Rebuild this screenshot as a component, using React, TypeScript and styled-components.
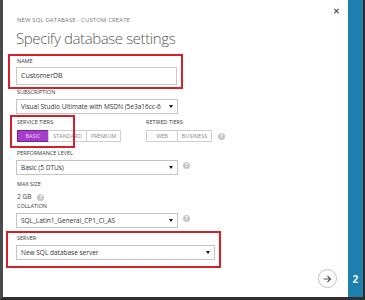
import React from "react";
import styled, { createGlobalStyle } from "styled-components";

const GlobalStyle = createGlobalStyle`
  html, body {
    margin: 0;
    padding: 0;
    background: #fff;
  }
  body {
    font-family: "Open Sans", "Noto Sans", "Liberation Sans", sans-serif;
  }
`;

const Frame = styled.div`
  width: 365px;
  height: 300px;
  box-sizing: border-box;
  display: flex;
  background: #fff;
  border-left: 3px solid #4a4a4a;
  border-right: 2px solid #2c2c2c;
  border-bottom: 3px solid #2f2f2f;
`;

const Main = styled.div`
  position: relative;
  flex: 1;
  display: flex;
  flex-direction: column;
  padding: 16px 11px 9px 13px;
`;

const CloseButton = styled.span`
  position: absolute;
  top: 6px;
  right: 8px;
  font-size: 8px;
  line-height: 10px;
  font-weight: 700;
  color: #555;
`;

const Subtitle = styled.div`
  font-size: 6px;
  line-height: 8px;
  color: #7a7a7a;
  letter-spacing: 0.1px;
  padding-left: 1px;
`;

const Heading = styled.h1`
  margin: 4px 0 0;
  font-size: 15px;
  line-height: 20px;
  font-weight: 300;
  letter-spacing: -0.4px;
  color: #5a5a5a;
`;

const Field = styled.div<{ $mt: number; $width?: number }>`
  position: relative;
  margin-top: ${(p) => p.$mt}px;
  width: ${(p) => (p.$width ? `${p.$width}px` : "auto")};
`;

const Callout = styled.div<{ $t: number; $l: number; $r: number; $b: number }>`
  position: absolute;
  top: ${(p) => -p.$t}px;
  left: ${(p) => -p.$l}px;
  right: ${(p) => -p.$r}px;
  bottom: ${(p) => -p.$b}px;
  border: 2px solid #d71f2b;
  pointer-events: none;
`;

const Label = styled.div`
  font-size: 5.5px;
  line-height: 6px;
  color: #3a3a3a;
  text-transform: uppercase;
  padding-left: 1px;
`;

const TextInput = styled.div`
  margin-top: 3px;
  width: 161px;
  height: 18px;
  box-sizing: border-box;
  border: 1px solid #c8c8c8;
  font-size: 7px;
  line-height: 16px;
  padding-left: 4px;
  color: #333;
`;

const ControlRow = styled.div`
  display: flex;
  align-items: center;
  gap: 5px;
`;

const Select = styled.div<{ $width: number }>`
  margin-top: 4px;
  width: ${(p) => p.$width}px;
  height: 15px;
  box-sizing: border-box;
  border: 1px solid #c4c4c4;
  display: flex;
  align-items: center;
  justify-content: space-between;
  padding: 0 4px;
  font-size: 6.5px;
  color: #333;
  white-space: nowrap;
  overflow: hidden;
`;

const Arrow = styled.svg`
  flex: none;
  width: 4px;
  height: 3px;
  margin-left: 2px;
`;

const Help = styled.span`
  display: inline-flex;
  align-items: center;
  justify-content: center;
  width: 7px;
  height: 7px;
  border-radius: 50%;
  background: #c6c6c6;
  color: #fff;
  font-size: 5px;
  font-weight: 700;
  line-height: 1;
`;

const TierRow = styled.div`
  display: flex;
  margin-top: 5px;
  gap: 24px;
  align-items: flex-end;
`;

const TierGroup = styled.div`
  position: relative;
`;

const Segments = styled.div`
  display: flex;
  align-items: center;
  margin-top: 5px;
  padding-left: 1px;
`;

const Segment = styled.span<{ $width: number; $active?: boolean }>`
  width: ${(p) => p.$width}px;
  height: 12px;
  box-sizing: border-box;
  display: flex;
  align-items: center;
  justify-content: center;
  margin-left: -1px;
  font-size: 5.5px;
  text-transform: uppercase;
  color: ${(p) => (p.$active ? "#f1dcf7" : "#8a8a8a")};
  background: ${(p) => (p.$active ? "#a73bcb" : "#fff")};
  border: 1px solid ${(p) => (p.$active ? "#6f2a86" : "#cfcfcf")};
  &:first-child {
    margin-left: 0;
  }
`;

const SizeRow = styled.div`
  display: flex;
  align-items: center;
  gap: 6px;
  margin-top: 6px;
  padding-left: 1px;
  font-size: 6.5px;
  line-height: 8px;
  color: #444;
`;

const Footer = styled.div`
  margin-top: auto;
  display: flex;
  justify-content: flex-end;
`;

const NextButton = styled.span`
  width: 19px;
  height: 19px;
  box-sizing: border-box;
  border-radius: 50%;
  border: 1px solid #c2c2c2;
  background: #fff;
  display: flex;
  align-items: center;
  justify-content: center;
`;

const StepBar = styled.div`
  width: 15px;
  background: #1c7fae;
  display: flex;
  flex-direction: column;
  justify-content: flex-end;
  align-items: center;
  padding-bottom: 12px;
  color: #fff;
  font-size: 10px;
  font-weight: 700;
  font-family: "Liberation Sans", sans-serif;
`;

function DropArrow() {
  return (
    <Arrow viewBox="0 0 4 3">
      <path d="M0 0 L4 0 L2 3 Z" fill="#111" />
    </Arrow>
  );
}

export default function App() {
  return (
    <>
      <GlobalStyle />
      <Frame>
        <Main>
          <CloseButton>✕</CloseButton>
          <Subtitle>NEW SQL DATABASE - CUSTOM CREATE</Subtitle>
          <Heading>Specify database settings</Heading>

          <Field $mt={10} $width={161}>
            <Callout $t={4} $l={8} $r={6} $b={4} />
            <Label>Name</Label>
            <TextInput>CustomerDB</TextInput>
          </Field>

          <Field $mt={4}>
            <Label>Subscription</Label>
            <Select $width={162}>
              Visual Studio Ultimate with MSDN (5e3a16cc-6
              <DropArrow />
            </Select>
          </Field>

          <TierRow>
            <TierGroup>
              <Callout $t={4} $l={6} $r={-46} $b={6} />
              <Label>Service tiers</Label>
              <Segments>
                <Segment $width={32} $active>
                  Basic
                </Segment>
                <Segment $width={39}>Standard</Segment>
                <Segment $width={35}>Premium</Segment>
              </Segments>
            </TierGroup>
            <TierGroup>
              <Label>Retired tiers</Label>
              <Segments>
                <Segment $width={32}>Web</Segment>
                <Segment $width={35}>Business</Segment>
                <Help style={{ marginLeft: 6 }}>?</Help>
              </Segments>
            </TierGroup>
          </TierRow>

          <Field $mt={8}>
            <Label>Performance level</Label>
            <ControlRow>
              <Select $width={162}>
                Basic (5 DTUs)
                <DropArrow />
              </Select>
              <Help>?</Help>
            </ControlRow>
          </Field>

          <Field $mt={6}>
            <Label>Max size</Label>
            <SizeRow>
              2 GB
              <Help>?</Help>
            </SizeRow>
          </Field>

          <Field $mt={2}>
            <Label>Collation</Label>
            <ControlRow>
              <Select $width={162}>
                SQL_Latin1_General_CP1_CI_AS
                <DropArrow />
              </Select>
              <Help>?</Help>
            </ControlRow>
          </Field>

          <Field $mt={7} $width={199}>
            <Callout $t={4} $l={10} $r={6} $b={8} />
            <Label>Server</Label>
            <Select $width={199}>
              New SQL database server
              <DropArrow />
            </Select>
          </Field>

          <Footer>
            <NextButton>
              <svg width="9" height="8" viewBox="0 0 9 8">
                <path
                  d="M0.5 4 H7.5 M4.5 1 L7.5 4 L4.5 7"
                  stroke="#555"
                  strokeWidth="1.2"
                  fill="none"
                />
              </svg>
            </NextButton>
          </Footer>
        </Main>
        <StepBar>2</StepBar>
      </Frame>
    </>
  );
}
